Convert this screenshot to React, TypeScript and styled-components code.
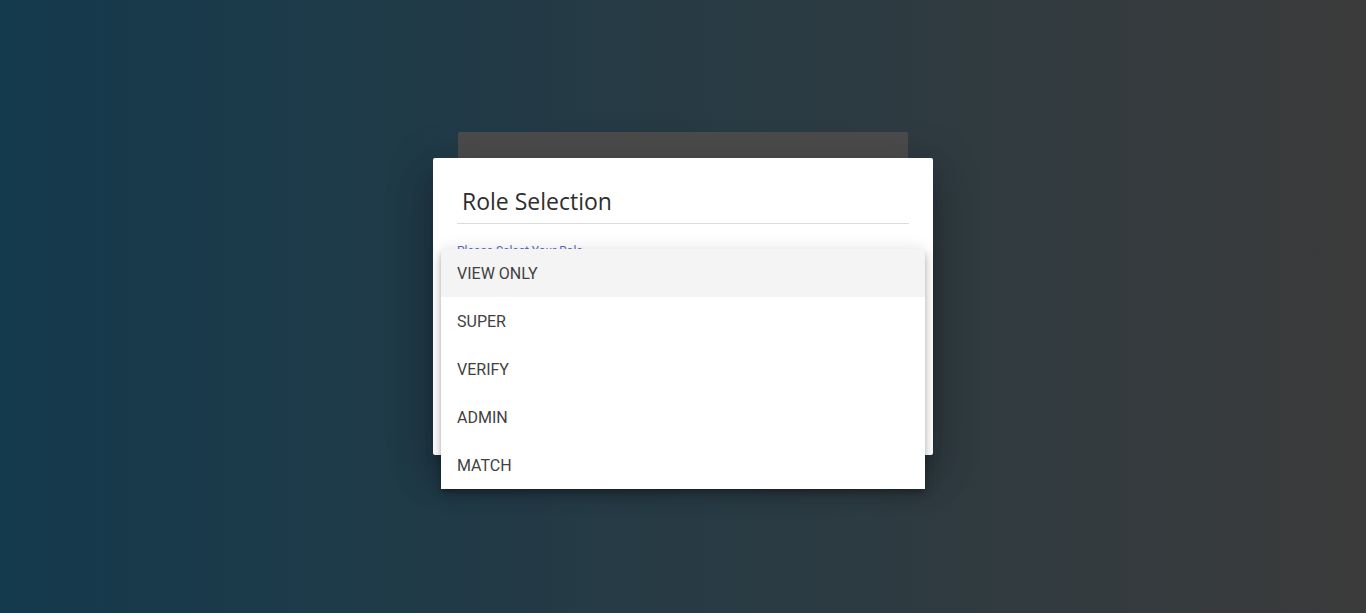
import React from 'react';
import styled, { createGlobalStyle } from 'styled-components';

const GlobalStyle = createGlobalStyle`
  html, body {
    margin: 0;
    padding: 0;
    height: 100%;
  }
  body {
    font-family: Roboto, "Liberation Sans", sans-serif;
  }
  #root {
    height: 100%;
  }
`;

const Page = styled.div`
  height: 613px;
  background: linear-gradient(to right, #143a4d 0%, #3b3b3b 100%);
  display: flex;
  flex-direction: column;
  align-items: center;
  padding-top: 132px;
  box-sizing: border-box;
  overflow: hidden;
`;

const Stack = styled.div`
  display: flex;
  flex-direction: column;
  align-items: center;
  position: relative;
`;

const BackCard = styled.div`
  width: 450px;
  height: 26px;
  background: #4b4b4b;
  border-radius: 2px 2px 0 0;
`;

const Dialog = styled.div`
  position: relative;
  width: 500px;
  height: 297px;
  background: #fff;
  border-radius: 2px;
  padding: 0 24px;
  box-sizing: border-box;
  box-shadow: 0 11px 15px -7px rgba(0, 0, 0, 0.2), 0 24px 38px 3px rgba(0, 0, 0, 0.14),
    0 9px 46px 8px rgba(0, 0, 0, 0.12);
`;

const Title = styled.h2`
  margin: 0;
  padding: 29px 0 8px 5px;
  font-family: "Open Sans", sans-serif;
  font-weight: 400;
  font-size: 23px;
  line-height: 28px;
  color: #2e2e2e;
  border-bottom: 1px solid #dcdcdc;
`;

const Label = styled.div`
  margin-top: 20px;
  font-family: Roboto, sans-serif;
  font-size: 12px;
  line-height: 14px;
  color: #5c6bc0;
`;

const Menu = styled.ul`
  position: absolute;
  top: 91px;
  left: 8px;
  width: 484px;
  margin: 0;
  padding: 0;
  list-style: none;
  background: #fff;
  border-radius: 2px;
  box-shadow: 0 3px 5px -1px rgba(0, 0, 0, 0.2), 0 6px 10px 0 rgba(0, 0, 0, 0.14),
    0 1px 18px 0 rgba(0, 0, 0, 0.12);
`;

const MenuItem = styled.li<{ $active?: boolean }>`
  height: 48px;
  display: flex;
  align-items: center;
  padding: 0 16px;
  font-family: Roboto, sans-serif;
  font-size: 16px;
  color: #414141;
  background: ${p => (p.$active ? '#f4f4f4' : '#fff')};
`;

const roles = ['VIEW ONLY', 'SUPER', 'VERIFY', 'ADMIN', 'MATCH'];

export default function App() {
  return (
    <>
      <GlobalStyle />
      <Page>
        <Stack>
          <BackCard />
          <Dialog>
            <Title>Role Selection</Title>
            <Label>Please Select Your Role</Label>
            <Menu>
              {roles.map((r, i) => (
                <MenuItem key={r} $active={i === 0}>
                  {r}
                </MenuItem>
              ))}
            </Menu>
          </Dialog>
        </Stack>
      </Page>
    </>
  );
}
